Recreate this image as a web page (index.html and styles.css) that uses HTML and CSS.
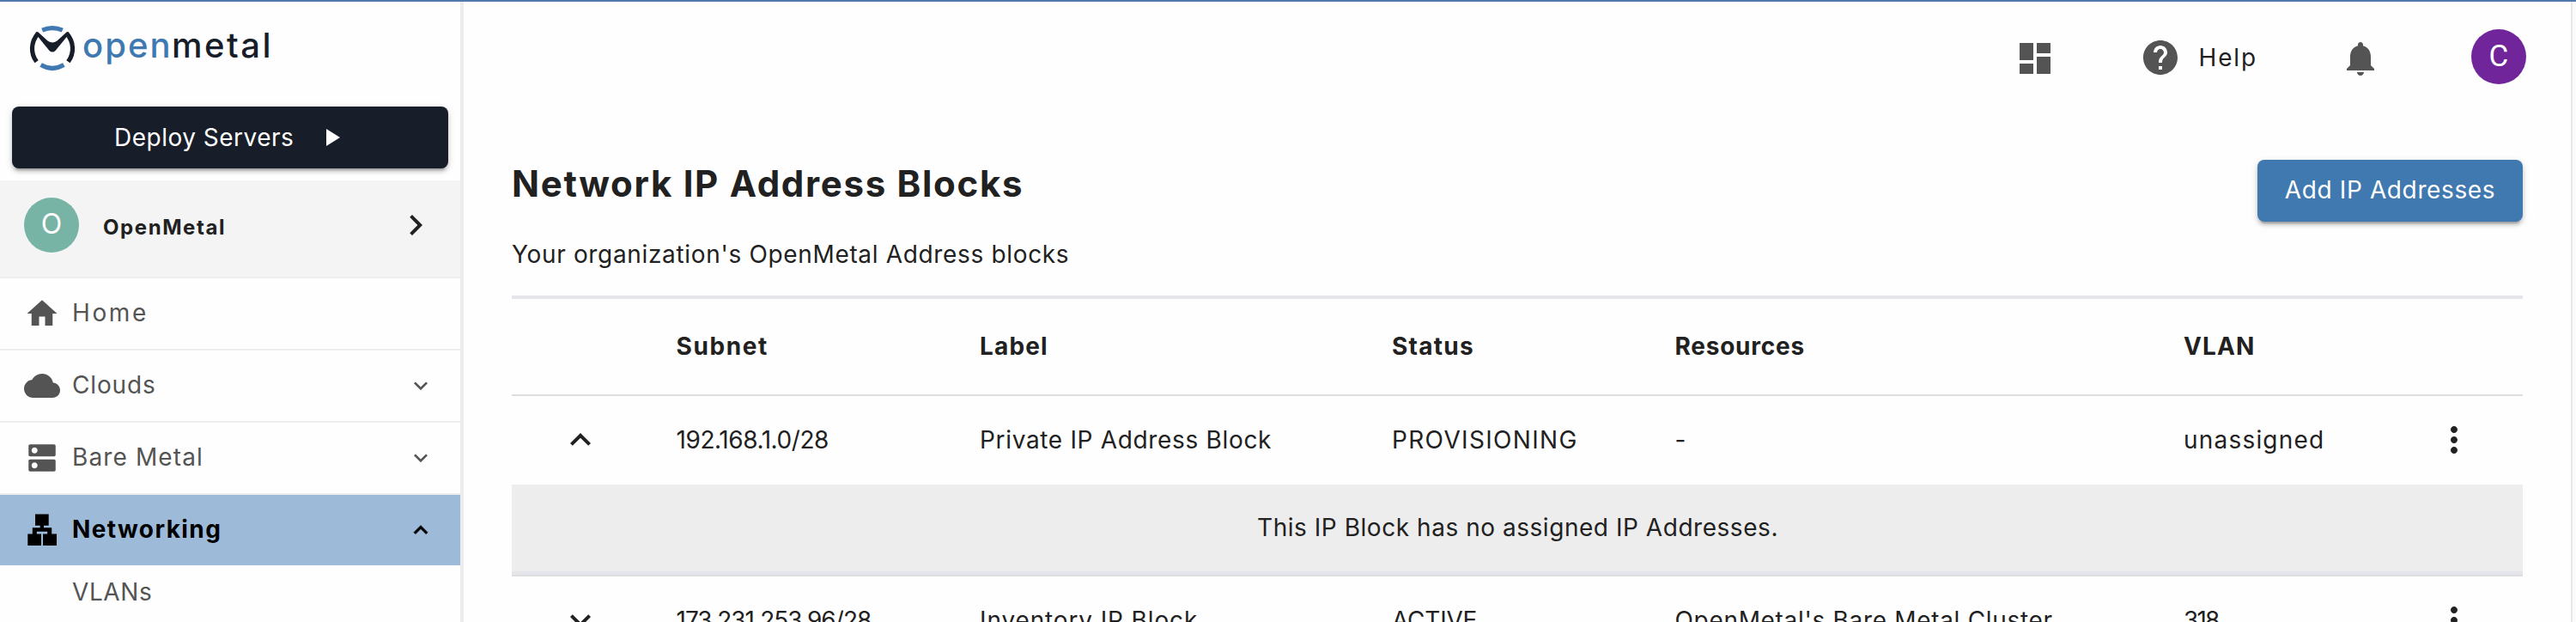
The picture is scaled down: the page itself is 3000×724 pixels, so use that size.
FILE: index.html
```
<!DOCTYPE html>
<html lang="en">
<head>
<meta charset="utf-8">
<title>Network IP Address Blocks</title>
<link rel="stylesheet" href="styles.css">
</head>
<body>
<div class="app">
  <aside class="sidebar">
    <div class="logo">
      <svg class="logo-mark" viewBox="0 0 54 54">
        <g fill="none" stroke-width="5.2">
          <path stroke="#4079b1" d="M15.2 6.2Q27 1.2 38.8 6.2M13.6 46.6Q27 54.4 40.4 46.6"/>
          <path stroke="#171e29" d="M8.6 42.8C1.2 32.500 1.800 20 10.400 9.800M45.400 42.800C52.800 32.500 52.200 20 43.600 9.800"/>
        </g>
        <path fill="#171e29" d="M8.600 8.400L10 8L21.500 18.500Q27 22.500 32.500 18.500L44 8L45.400 8.400L47.300 11.500L44 13.500L30.500 30Q27 33 23.500 30L10 13.500L6.700 11.500Z"/>
      </svg>
      <span class="wordmark"><span class="word-open">open</span><span class="word-metal">metal</span></span>
    </div>
    <button class="deploy"><span class="t-deploy">Deploy Servers</span><svg class="play" viewBox="0 0 16 20"><path fill="#fff" d="M0 0L16 10L0 20Z"/></svg></button>
    <div class="org">
      <span class="org-avatar">O</span>
      <strong class="org-name">OpenMetal</strong>
      <svg class="icon-lg" viewBox="0 0 24 24"><path d="M10 6L8.590 7.410L13.170 12L8.590 16.590L10 18L16 12Z"/></svg>
    </div>
    <nav>
      <a class="nav-item"><svg class="nav-icon" viewBox="0 0 24 24"><path d="M10 20v-6h4v6h5v-8h3L12 3L2 12h3v8z"/></svg><span class="t-home">Home</span></a>
      <a class="nav-item"><svg class="nav-icon" viewBox="0 0 24 24"><path d="M19.350 10.040C18.670 6.590 15.640 4 12 4 9.110 4 6.600 5.640 5.350 8.040 2.340 8.360 0 10.910 0 14c0 3.310 2.690 6 6 6h13c2.760 0 5-2.240 5-5 0-2.640-2.050-4.780-4.650-4.960z"/></svg><span class="t-clouds">Clouds</span><svg class="caret" viewBox="0 0 24 24"><path d="M16.590 8.590L12 13.170L7.410 8.590L6 10l6 6l6-6z"/></svg></a>
      <a class="nav-item"><svg class="nav-icon" viewBox="0 0 24 24"><path d="M20 13H4c-.55 0-1 .45-1 1v6c0 .55.45 1 1 1h16c.55 0 1-.45 1-1v-6c0-.55-.45-1-1-1zM7 19c-1.100 0-2-.9-2-2s.9-2 2-2 2 .9 2 2-.9 2-2 2zM20 3H4c-.55 0-1 .45-1 1v6c0 .55.45 1 1 1h16c.55 0 1-.45 1-1V4c0-.55-.45-1-1-1zM7 9c-1.100 0-2-.9-2-2s.9-2 2-2 2 .9 2 2-.9 2-2 2z"/></svg><span class="t-bare">Bare Metal</span><svg class="caret" viewBox="0 0 24 24"><path d="M16.590 8.590L12 13.170L7.410 8.590L6 10l6 6l6-6z"/></svg></a>
      <a class="nav-item active"><svg class="nav-icon" viewBox="0 0 42 42"><path d="M13 2.500H28.700V15.800H23V18.200H32.200V25.500H38V39H22V25.500H27.200V22.800H14.800V25.500H20V39H4.300V25.500H9.800V18.200H18.700V15.800H13Z"/></svg><span class="t-net">Networking</span><svg class="caret" viewBox="0 0 24 24"><path d="M12 8L6 14l1.410 1.410L12 10.830l4.590 4.580L18 14z"/></svg></a>
      <a class="sub-item"><span class="t-vlans">VLANs</span></a>
    </nav>
  </aside>
  <main class="main">
    <header class="topbar">
      <svg class="icon-lg gray" viewBox="0 0 24 24"><path d="M3 13h8V3H3v10zm0 8h8v-6H3v6zm10 0h8V11h-8v10zm0-18v6h8V3h-8z"/></svg>
      <div class="help">
        <svg class="icon-lg gray" viewBox="0 0 24 24"><path d="M12 2C6.480 2 2 6.480 2 12s4.480 10 10 10 10-4.480 10-10S17.520 2 12 2zm1 17h-2v-2h2v2zm2.070-7.750l-.9.920C13.450 12.900 13 13.500 13 15h-2v-.5c0-1.100.45-2.100 1.170-2.830l1.240-1.260c.37-.36.59-.86.59-1.410 0-1.100-.9-2-2-2s-2 .9-2 2H8c0-2.210 1.790-4 4-4s4 1.790 4 4c0 .88-.36 1.680-.93 2.250z"/></svg>
        <span class="t-help">Help</span>
      </div>
      <svg class="icon-lg gray" viewBox="0 0 24 24"><path d="M12 22c1.100 0 2-.9 2-2h-4c0 1.100.89 2 2 2zm6-6v-5c0-3.070-1.640-5.640-4.500-6.320V4c0-.83-.67-1.500-1.500-1.500s-1.500.67-1.500 1.500v.68C7.630 5.360 6 7.920 6 11v5l-2 2v1h16v-1l-2-2z"/></svg>
      <span class="user-avatar">C</span>
    </header>
    <section class="intro">
      <div>
        <h1>Network IP Address Blocks</h1>
        <p class="subtitle">Your organization's OpenMetal Address blocks</p>
      </div>
      <button class="add"><span class="t-add">Add IP Addresses</span></button>
    </section>
    <section class="table">
      <div class="row head">
        <span></span><span class="t-subnet">Subnet</span><span class="t-label">Label</span><span class="t-status">Status</span><span class="t-resources">Resources</span><span class="t-vlan">VLAN</span><span></span>
      </div>
      <div class="row">
        <svg class="icon-lg row-icon" viewBox="0 0 24 24"><path d="M12 8L6 14l1.410 1.410L12 10.830l4.590 4.580L18 14z"/></svg>
        <span class="t-ip1">192.168.1.0/28</span><span class="t-private">Private IP Address Block</span><span class="t-prov">PROVISIONING</span><span>-</span><span class="t-unassigned">unassigned</span>
        <svg class="icon-lg row-icon" viewBox="0 0 24 24"><path d="M12 8c1.100 0 2-.9 2-2s-.9-2-2-2-2 .9-2 2 .9 2 2 2zm0 2c-1.100 0-2 .9-2 2s.9 2 2 2 2-.9 2-2-.9-2-2-2zm0 6c-1.100 0-2 .9-2 2s.9 2 2 2 2-.9 2-2-.9-2-2-2z"/></svg>
      </div>
      <div class="detail"><span class="t-detail">This IP Block has no assigned IP Addresses.</span></div>
      <div class="row">
        <svg class="icon-lg row-icon" viewBox="0 0 24 24"><path d="M16.590 8.590L12 13.170L7.410 8.590L6 10l6 6l6-6z"/></svg>
        <span class="t-ip2">173.231.253.96/28</span><span class="t-inventory">Inventory IP Block</span><span class="t-active">ACTIVE</span><span class="t-cluster">OpenMetal's Bare Metal Cluster</span><span class="t-318">318</span>
        <svg class="icon-lg row-icon" viewBox="0 0 24 24"><path d="M12 8c1.100 0 2-.9 2-2s-.9-2-2-2-2 .9-2 2 .9 2 2 2zm0 2c-1.100 0-2 .9-2 2s.9 2 2 2 2-.9 2-2-.9-2-2-2zm0 6c-1.100 0-2 .9-2 2s.9 2 2 2 2-.9 2-2-.9-2-2-2z"/></svg>
      </div>
    </section>
  </main>
  <div class="gutter"></div>
</div>
</body>
</html>
```

FILE: styles.css
```
* { box-sizing: border-box; }
body { margin: 0; background: #fefefe; color: #212121; font: 28px/36px Inter, "Open Sans", sans-serif; white-space: nowrap; }
.app { display: flex; height: 724px; overflow: hidden; border-top: 2px solid #5079ad; }
svg { display: block; flex: none; fill: currentColor; }
button { border: 0; font: inherit; color: #fff; display: flex; align-items: center; box-shadow: 0 6px 2px -4px rgba(0,0,0,.2), 0 4px 4px rgba(0,0,0,.16), 0 2px 10px rgba(0,0,0,.12); }
.icon-lg { width: 48px; height: 48px; }
.gray { color: #545454; }

/* Sidebar */
.sidebar { flex: none; width: 540px; border-right: 4px solid #ececec; }
.logo { display: flex; height: 122px; padding: 27px 0 0 34px; gap: 8px; }
.logo-mark { width: 54px; height: 54px; }
.wordmark { display: flex; font-size: 40px; font-weight: 550; line-height: 50px; margin-top: -1px; }
.word-open { color: #4079b1; width: 104px; letter-spacing: 2px; }
.word-metal { color: #171e29; letter-spacing: 2.5px; }
.deploy { width: 508px; height: 72px; margin: 0 0 14px 14px; padding: 0 0 1px 119px; gap: 38px; background: #171e29; border-radius: 8px; }
.play { width: 16px; height: 20px; }
.org { display: flex; align-items: center; height: 114px; padding: 0 28px 8px 28px; background: #f4f4f4; border-bottom: 2px solid #eee; }
.org-avatar { width: 64px; height: 64px; border-radius: 50%; background: #78b4a6; color: #fff; text-align: center; font-size: 32px; line-height: 61px; }
.org-name { flex: 1; padding: 6px 0 0 28px; font-size: 24px; letter-spacing: 1.58px; }
.nav-item { display: flex; align-items: center; height: 84px; padding: 0 30px 0 28px; border-bottom: 2px solid #ededed; color: #545454; }
.nav-item span { flex: 1; padding: 0 0 2px 14px; }
.nav-icon { width: 42px; height: 42px; }
.caret { width: 32px; height: 32px; }
.nav-item.active { height: 82px; border: 0; background: #9dbbd8; color: #000; font-weight: 700; }
.active .caret { stroke: #000; stroke-width: .6; }
.sub-item { display: block; padding: 13px 0 0 84px; color: #545454; }

/* Main column */
.main { flex: none; width: 2454px; padding: 0 56px; }
.gutter { flex: 1; background: #fafafa; border-left: 2px solid #e8e8e8; }
.topbar { display: flex; align-items: center; justify-content: flex-end; height: 132px; }
.help { display: flex; align-items: center; margin: 0 0 2px 98px; width: 233.500px; gap: 21px; }
.user-avatar { width: 64px; height: 64px; margin: 0 -4px 4px 105px; border-radius: 50%; background: #70259a; color: #fff; text-align: center; font: 35px/64px Roboto, sans-serif; }
.intro { display: flex; justify-content: space-between; height: 210px; padding-top: 52px; }
h1 { margin: 3px 0 39px; font-size: 42px; line-height: 50px; letter-spacing: 1.68px; }
.subtitle { margin: 0; letter-spacing: .66px; }
.add { width: 309px; height: 72px; padding: 0 0 2px; justify-content: center; background: #4078b0; border-radius: 8px; }

/* Table */
.table { width: 2342px; border-top: 4px solid #e5e5ea; }
.row { display: grid; grid-template-columns: 191.500px 353.500px 480px 329.500px 592.500px 235px 160px; align-items: center; height: 103px; }
.row span { padding-bottom: 2px; }
.row-icon { margin: 0 0 2px 56px; }
.head { height: 113px; border-bottom: 2px solid #dedede; font-weight: 700; }
.detail { height: 107px; padding: 32px 0 0 1px; text-align: center; background: #ededed; border-bottom: 2px solid #dedede; box-shadow: inset 0 -4px #e3e5ea; }

/* Text tracking */
.t-deploy { letter-spacing: .49px; }
.t-home { letter-spacing: 2.600px; }
.t-clouds { letter-spacing: .86px; }
.t-bare { letter-spacing: 1.120px; }
.t-net { letter-spacing: 1.400px; }
.t-vlans { letter-spacing: .61px; }
.t-help { letter-spacing: 1.860px; }
.t-add { letter-spacing: .62px; }
.t-subnet { letter-spacing: 1.590px; }
.t-label { letter-spacing: 1.150px; }
.t-status { letter-spacing: 1.270px; }
.t-resources { letter-spacing: .76px; }
.t-vlan { letter-spacing: 1.120px; }
.t-ip1 { letter-spacing: -.43px; }
.t-private { letter-spacing: .67px; }
.t-prov { letter-spacing: 1.340px; }
.t-unassigned { letter-spacing: 1.200px; }
.t-detail { letter-spacing: .54px; }
.t-ip2 { letter-spacing: -.96px; }
.t-inventory { letter-spacing: .87px; }
.t-active { letter-spacing: -.25px; }
.t-cluster { letter-spacing: .68px; }
.t-318 { letter-spacing: -1.840px; }
```
